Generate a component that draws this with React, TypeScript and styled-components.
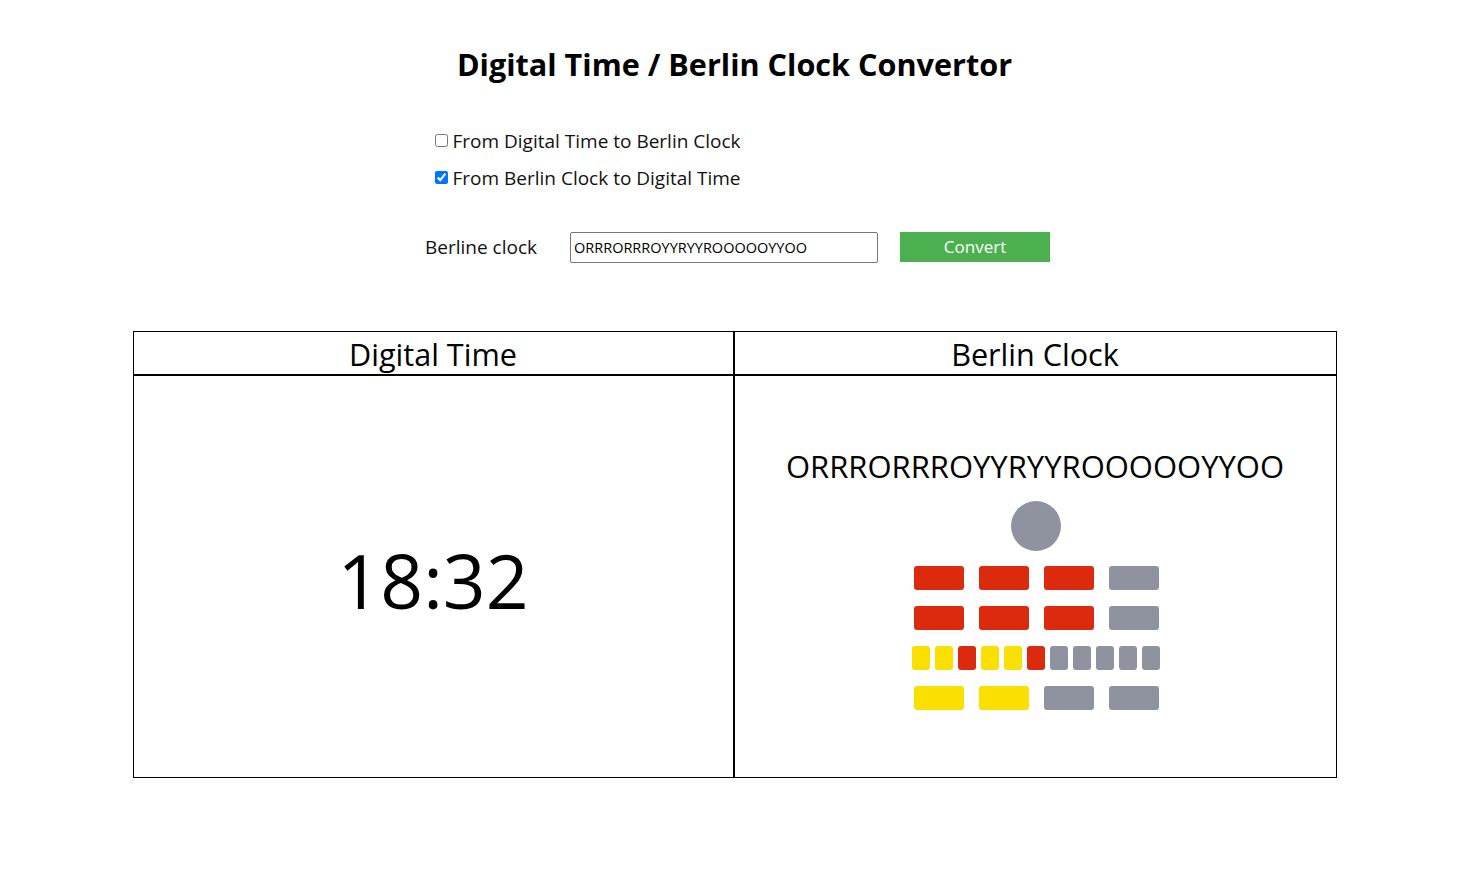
import React, { useState } from "react";
import styled, { createGlobalStyle } from "styled-components";

const GlobalStyle = createGlobalStyle`
  body {
    margin: 0;
    background: #ffffff;
    color: #000000;
    font-family: "Open Sans", "Noto Sans", sans-serif;
  }
`;

const Page = styled.div`
  display: flex;
  flex-direction: column;
  align-items: center;
  padding-top: 44px;
`;

const Title = styled.h1`
  margin: 0;
  font-size: 30.6px;
  line-height: 40px;
  font-weight: 700;
`;

const Options = styled.div`
  width: 600px;
  margin-top: 38px;
  display: flex;
  flex-direction: column;
`;

const OptionRow = styled.label`
  display: flex;
  align-items: center;
  height: 37px;
  font-size: 19px;
  color: #111;
`;

const Check = styled.input`
  width: 13px;
  height: 13px;
  margin: 0 5px 0 0;
`;

const FormRow = styled.div`
  display: flex;
  align-items: center;
  margin-top: 34px;
  margin-left: 6px;
`;

const FieldLabel = styled.span`
  font-size: 19px;
  color: #111;
  width: 145px;
`;

const TextInput = styled.input`
  box-sizing: border-box;
  width: 308px;
  height: 31px;
  margin-top: 2px;
  padding: 0 3px;
  border: 1px solid #767676;
  border-radius: 2px;
  font-family: "Open Sans", sans-serif;
  font-size: 14.5px;
  color: #000;
`;

const ConvertButton = styled.button`
  margin-left: 22px;
  width: 150px;
  height: 30px;
  border: none;
  background: #4caf50;
  color: #fff;
  font-family: "Open Sans", sans-serif;
  font-size: 17px;
  cursor: pointer;
`;

const Board = styled.div`
  box-sizing: border-box;
  width: 1204px;
  margin-top: 68px;
  display: grid;
  grid-template-columns: 1fr 1fr;
  grid-template-rows: 44px 401px;
  border: 1px solid #000;
`;

const HeadCell = styled.div<{ $left?: boolean }>`
  display: flex;
  align-items: center;
  justify-content: center;
  padding-top: 2px;
  font-size: 30.6px;
  border-bottom: 2px solid #000;
  border-right: ${(p) => (p.$left ? "2px solid #000" : "none")};
`;

const BodyCell = styled.div<{ $left?: boolean }>`
  display: flex;
  flex-direction: column;
  align-items: center;
  justify-content: center;
  border-right: ${(p) => (p.$left ? "2px solid #000" : "none")};
`;

const BigTime = styled.div`
  font-size: 75px;
  line-height: 1;
  margin-top: 8px;
`;

const ClockText = styled.div`
  font-size: 31px;
  line-height: 40px;
  margin-bottom: 15px;
  margin-top: 2px;
`;

const Seconds = styled.div<{ $on: boolean }>`
  width: 50px;
  height: 50px;
  border-radius: 50%;
  background: ${(p) => (p.$on ? "#f9e000" : "#8f93a0")};
  margin-bottom: 15px;
`;

const LampRow = styled.div<{ $small?: boolean }>`
  display: flex;
  gap: ${(p) => (p.$small ? "5px" : "15px")};
  margin-bottom: 16px;
  &:last-child {
    margin-bottom: 0;
  }
`;

const colors: Record<string, string> = {
  R: "#db2a0d",
  Y: "#f9e000",
  O: "#8f93a0",
};

const Lamp = styled.div<{ $state: string; $small?: boolean }>`
  width: ${(p) => (p.$small ? "18px" : "50px")};
  height: 24px;
  border-radius: 3px;
  background: ${(p) => colors[p.$state] || colors.O};
`;

const Lamps = styled.div`
  display: flex;
  flex-direction: column;
  align-items: center;
  margin-left: 2px;
`;

const App: React.FC = () => {
  const [mode, setMode] = useState<"toBerlin" | "toDigital">("toDigital");
  const [value, setValue] = useState("ORRRORRROYYRYYROOOOOYYOO");
  const clock = "ORRRORRROYYRYYROOOOOYYOO";

  const rows = [clock.slice(1, 5), clock.slice(5, 9), clock.slice(9, 20), clock.slice(20, 24)];

  return (
    <>
      <GlobalStyle />
      <Page>
        <Title>Digital Time / Berlin Clock Convertor</Title>
        <Options>
          <OptionRow>
            <Check
              type="checkbox"
              checked={mode === "toBerlin"}
              onChange={() => setMode("toBerlin")}
            />
            From Digital Time to Berlin Clock
          </OptionRow>
          <OptionRow>
            <Check
              type="checkbox"
              checked={mode === "toDigital"}
              onChange={() => setMode("toDigital")}
            />
            From Berlin Clock to Digital Time
          </OptionRow>
        </Options>
        <FormRow>
          <FieldLabel>Berline clock</FieldLabel>
          <TextInput value={value} onChange={(e) => setValue(e.target.value)} />
          <ConvertButton>Convert</ConvertButton>
        </FormRow>
        <Board>
          <HeadCell $left>Digital Time</HeadCell>
          <HeadCell>Berlin Clock</HeadCell>
          <BodyCell $left>
            <BigTime>18:32</BigTime>
          </BodyCell>
          <BodyCell>
            <ClockText>{clock}</ClockText>
            <Lamps>
              <Seconds $on={clock[0] === "Y"} />
              {rows.map((row, i) => (
                <LampRow key={i} $small={row.length > 4}>
                  {row.split("").map((s, j) => (
                    <Lamp key={j} $state={s} $small={row.length > 4} />
                  ))}
                </LampRow>
              ))}
            </Lamps>
          </BodyCell>
        </Board>
      </Page>
    </>
  );
};

export default App;
